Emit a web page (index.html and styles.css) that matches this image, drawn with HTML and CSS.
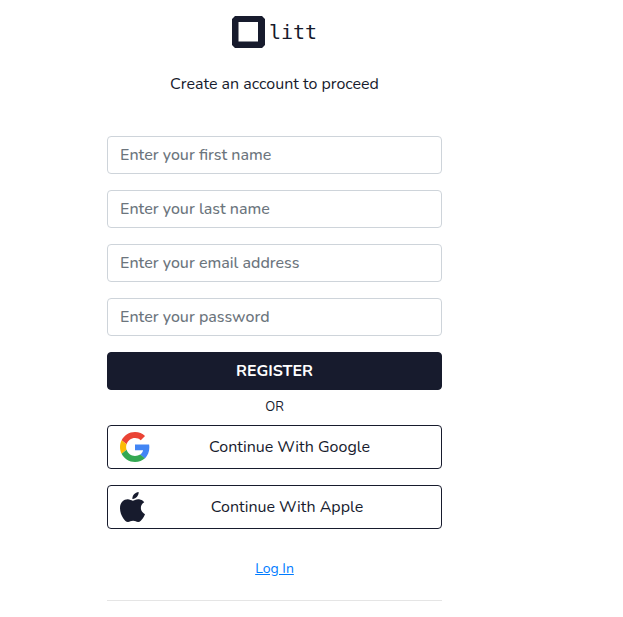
FILE: index.html
```html
<!DOCTYPE html>
<html lang="en">
<head>
<meta charset="utf-8">
<meta name="viewport" content="width=device-width, initial-scale=1">
<title>Olitt - Create an account</title>
<link rel="stylesheet" href="styles.css">
</head>
<body>
<main class="page">
  <div class="panel">
    <div class="brand">
      <svg class="brand-mark" viewBox="0 0 33 32" aria-hidden="true"><path fill="#171b2d" fill-rule="evenodd" d="M3 0H30L33 3V29L30 32H3L0 29V3ZM6.500 6V25.500H26V6Z"/></svg>
      <span class="brand-name">litt</span>
    </div>
    <p class="intro">Create an account to proceed</p>
    <form class="form">
      <input class="field" type="text" aria-label="First name" placeholder="Enter your first name">
      <input class="field" type="text" aria-label="Last name" placeholder="Enter your last name">
      <input class="field" type="email" aria-label="Email address" placeholder="Enter your email address">
      <input class="field" type="password" aria-label="Password" placeholder="Enter your password">
      <button class="register" type="submit">REGISTER</button>
    </form>
    <p class="divider">OR</p>
    <div class="providers">
      <button class="provider" type="button">
        <svg class="google" viewBox="0 0 48 48" aria-hidden="true">
          <path fill="#ea4335" d="M24 9.500c3.540 0 6.710 1.220 9.210 3.600l6.850-6.850C35.900 2.380 30.470 0 24 0 14.620 0 6.510 5.380 2.560 13.220l7.980 6.190C12.430 13.720 17.740 9.500 24 9.500z"/>
          <path fill="#4285f4" d="M46.980 24.550c0-1.570-.15-3.090-.38-4.550H24v9.020h12.940c-.58 2.960-2.260 5.480-4.780 7.180l7.730 6c4.510-4.180 7.090-10.360 7.090-17.650z"/>
          <path fill="#fbbc05" d="M10.530 28.590c-.48-1.450-.76-2.990-.76-4.590s.27-3.140.76-4.590l-7.980-6.190C.92 16.460 0 20.120 0 24c0 3.880.92 7.540 2.560 10.780l7.970-6.190z"/>
          <path fill="#34a853" d="M24 48c6.480 0 11.930-2.130 15.890-5.810l-7.730-6c-2.150 1.450-4.920 2.300-8.160 2.300-6.260 0-11.570-4.220-13.470-9.910l-7.980 6.190C6.510 42.620 14.620 48 24 48z"/>
        </svg>
        <span class="provider-name">Continue With Google</span>
      </button>
      <button class="provider" type="button">
        <svg class="apple" viewBox="0 0 814 1000" preserveAspectRatio="none" aria-hidden="true"><path fill="#171b2d" d="M788.100 340.900c-5.800 4.500-108.200 62.200-108.200 190.500 0 148.400 130.300 200.900 134.200 202.200-.6 3.200-20.700 71.900-68.700 141.900-42.800 61.600-87.500 123.100-155.500 123.100s-85.500-39.500-164-39.500c-76.500 0-103.700 40.800-165.900 40.800s-105.600-57-155.500-127C46.700 790.700 0 663 0 541.800c0-194.400 126.400-297.500 250.800-297.500 66.100 0 121.200 43.400 162.700 43.400 39.500 0 101.100-46 176.300-46 28.500 0 130.900 2.600 198.300 99.200zm-234-181.500c31.100-36.900 53.100-88.100 53.100-139.300 0-7.100-.6-14.300-1.900-20.100-50.600 1.900-110.800 33.700-147.100 75.800-28.500 32.400-55.100 83.600-55.100 135.500 0 7.800 1.300 15.600 1.900 18.100 3.200.6 8.400 1.300 13.600 1.300 45.400 0 102.500-30.400 135.500-71.300z"/></svg>
        <span class="provider-name">Continue With Apple</span>
      </button>
    </div>
    <p class="login"><a href="#login">Log In</a></p>
    <hr class="rule">
  </div>
</main>
</body>
</html>
```
FILE: styles.css
```css
* {
  box-sizing: border-box;
}

body {
  margin: 0;
  background: #fff;
  color: #171b2d;
  font-family: Nunito, "Open Sans", "Noto Sans", sans-serif;
  font-size: 16px;
  line-height: 24px;
}

.page {
  display: grid;
  grid-template-columns: 107fr 335fr 181fr;
  padding: 16px 0;
}

.panel {
  grid-column: 2;
  min-width: 0;
}

.brand {
  display: flex;
  align-items: center;
  justify-content: center;
  gap: 4px;
  height: 32px;
}

.brand-mark {
  width: 33px;
  height: 32px;
}

.brand-name {
  font-family: "DejaVu Sans Mono", monospace;
  font-size: 20px;
  line-height: 32px;
}

.intro {
  margin: 24px 0 40px;
  text-align: center;
}

.form,
.providers {
  display: grid;
  gap: 16px;
}

.field,
.register,
.provider {
  width: 100%;
  padding: 6px 12px;
  border: 1px solid #171b2d;
  border-radius: 4px;
  background: #fff;
  color: inherit;
  font: inherit;
}

.field {
  height: 38px;
  border-color: #ced4da;
  font-weight: 500;
}

.field::placeholder {
  color: #6c757d;
  opacity: 1;
}

.register {
  height: 38px;
  background: #171b2d;
  color: #fff;
  font-weight: 700;
}

.divider {
  margin: 6px 0;
  font-size: 13px;
  line-height: 23px;
  text-align: center;
}

.provider {
  display: flex;
  align-items: center;
  height: 44px;
}

.google,
.apple {
  flex: none;
  width: 30px;
  height: 30px;
}

.apple {
  width: 25px;
}

.provider-name {
  flex: 1;
  text-align: center;
}

.login {
  margin: 28px 0 19px;
  font-size: 14px;
  text-align: center;
}

.login a {
  color: #007bff;
  text-decoration: underline;
}

.rule {
  margin: 0;
  border: 0;
  border-top: 1px solid #e5e5e5;
}
```
